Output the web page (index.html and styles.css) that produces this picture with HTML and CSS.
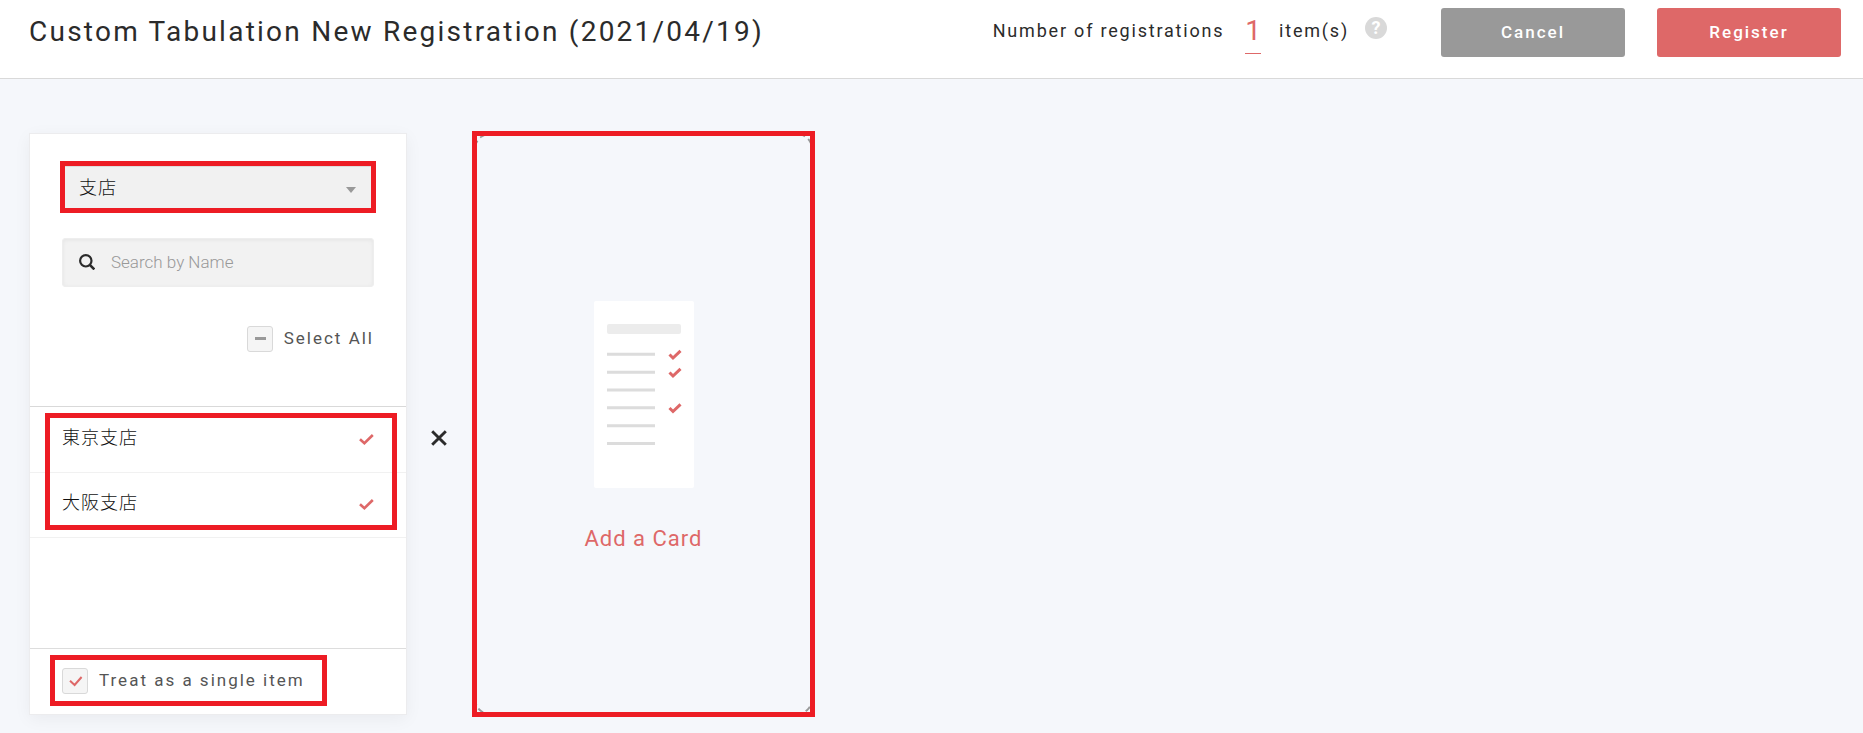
FILE: index.html
```html
<!DOCTYPE html>
<html lang="ja">
<head>
    <meta charset="UTF-8">
    <meta name="viewport" content="width=device-width, initial-scale=1.0">
    <title>Custom Tabulation New Registration</title>
    <link rel="stylesheet" href="styles.css">
</head>
<body>
    <header class="header">
        <h1 class="title">Custom Tabulation New Registration (2021/04/19)</h1>
        <div class="count">
            <span>Number of registrations</span>
            <span class="count-number">1</span>
            <span>item(s)</span>
            <button type="button" class="help" aria-label="Help">?</button>
        </div>
        <div class="actions">
            <button type="button" class="btn btn-cancel">Cancel</button>
            <button type="submit" class="btn btn-register">Register</button>
        </div>
    </header>

    <main class="main">
        <section class="card">
            <div class="card-head">
                <div class="select-box highlight">
                    <select class="select" aria-label="Category">
                        <option>支店</option>
                    </select>
                </div>
                <div class="search-box">
                    <svg class="search-icon" viewBox="0 0 16 16" aria-hidden="true">
                        <circle cx="6.8" cy="6.8" r="5.7" fill="none" stroke="#2b2b2b" stroke-width="2.2"/>
                        <path d="M10.8 10.8L15.4 15.4" stroke="#2b2b2b" stroke-width="2.6"/>
                    </svg>
                    <input type="text" class="search" placeholder="Search by Name" aria-label="Search by Name">
                </div>
                <label class="check-label select-all">
                    <span class="check">
                        <input type="checkbox">
                        <svg viewBox="0 0 26 26" aria-hidden="true"><path d="M8 12.5H19" stroke="#999" stroke-width="3"/></svg>
                    </span>
                    <span class="check-text">Select All</span>
                </label>
            </div>

            <div class="list">
                <ul class="rows highlight">
                    <li>
                        <label class="row">
                            <span class="row-name">東京支店</span>
                            <span class="tick">
                                <input type="checkbox" checked>
                                <svg viewBox="0 0 15 11" aria-hidden="true"><path d="M1 5.2L5.4 9.2L13.8 1" fill="none" stroke="#de6868" stroke-width="2.6"/></svg>
                            </span>
                        </label>
                    </li>
                    <li>
                        <label class="row">
                            <span class="row-name">大阪支店</span>
                            <span class="tick">
                                <input type="checkbox" checked>
                                <svg viewBox="0 0 15 11" aria-hidden="true"><path d="M1 5.2L5.4 9.2L13.8 1" fill="none" stroke="#de6868" stroke-width="2.6"/></svg>
                            </span>
                        </label>
                    </li>
                </ul>
            </div>

            <div class="card-foot">
                <label class="check-label single highlight">
                    <span class="check">
                        <input type="checkbox" checked>
                        <svg viewBox="0 0 26 26" aria-hidden="true"><path d="M8 12.8L12.6 17L19.6 9" fill="none" stroke="#de6868" stroke-width="2"/></svg>
                    </span>
                    <span class="check-text">Treat as a single item</span>
                </label>
            </div>
        </section>

        <svg class="cross" viewBox="0 0 16 16" aria-hidden="true">
            <path d="M1.2 1.2L14.8 14.8M14.8 1.2L1.2 14.8" stroke="#2b2b2b" stroke-width="2.9"/>
        </svg>

        <button type="button" class="add-card highlight">
            <svg class="add-picture" viewBox="0 0 100 187" aria-hidden="true">
                <rect width="100" height="187" rx="2" fill="#fff"/>
                <rect x="13" y="23" width="74" height="10" rx="2" fill="#ececec"/>
                <path d="M13 53.3H61M13 71.2H61M13 89H61M13 106.8H61M13 124.7H61M13 142.5H61" stroke="#dcdcdc" stroke-width="3"/>
                <path d="M75.5 53.5L79 57L86.5 49.8M75.5 71.5L79 75L86.5 67.8M75.5 107L79 110.5L86.5 103.3" fill="none" stroke="#de6868" stroke-width="3"/>
            </svg>
            <span>Add a Card</span>
        </button>
    </main>
</body>
</html>
```

FILE: styles.css
```css
* {
    box-sizing: border-box;
}

body {
    margin: 0;
    min-height: 100vh;
    background-color: #f5f7fb;
    color: #2b2b2b;
    font-family: Roboto, "Noto Sans CJK JP", sans-serif;
    font-size: 18px;
    letter-spacing: 1px;
}

button,
input,
select {
    margin: 0;
    font: inherit;
    letter-spacing: inherit;
}

button {
    cursor: pointer;
}

/* header */
.header {
    display: flex;
    align-items: flex-start;
    padding: 8px 22px 21px 29px;
    background-color: #fff;
    border-bottom: 1px solid #d9d9d9;
}

.title {
    flex: 1;
    margin: 0;
    font-size: 28px;
    font-weight: 400;
    line-height: 48px;
    letter-spacing: 0.08em;
}

.count {
    display: flex;
    align-items: center;
    margin-right: 54px;
    line-height: 46px;
    letter-spacing: 0.1em;
}

.count-number {
    margin: 0 18px 0 21px;
    border-bottom: 1px solid #de6868;
    color: #de6868;
    font-size: 28px;
    line-height: 45px;
    letter-spacing: 0;
}

.help {
    width: 22px;
    height: 22px;
    margin: 0 0 6px 16px;
    padding: 0;
    border: none;
    border-radius: 50%;
    background-color: #d9d9d9;
    color: #fff;
    font-size: 18px;
    font-weight: 700;
    line-height: 22px;
    letter-spacing: 0;
}

.actions {
    display: flex;
    gap: 32px;
}

.btn {
    width: 184px;
    height: 49px;
    padding: 0 0 2px;
    border: none;
    border-radius: 3px;
    color: #fff;
    font-size: 17px;
    font-weight: 500;
    letter-spacing: 2px;
}

.btn-cancel {
    background-color: #999;
}

.btn-register {
    background-color: #de6868;
}

/* red frames */
.highlight {
    position: relative;
}

.highlight::after {
    content: "";
    position: absolute;
    inset: -2px;
    border: 5px solid #ed1c24;
    pointer-events: none;
}

/* card */
.main {
    display: flex;
    align-items: stretch;
    padding: 54px 29px 18px;
}

.card {
    display: flex;
    flex-direction: column;
    width: 378px;
    background-color: #fff;
    border: 1px solid #ececee;
    box-shadow: 0 4px 16px rgba(0, 0, 0, 0.05);
}

.card-head {
    display: flex;
    flex-direction: column;
    padding: 29px 32px 54px;
    border-bottom: 1px solid #d9d9d9;
}

.select-box {
    padding-top: 3px;
}

.select {
    display: block;
    width: 100%;
    height: 45px;
    padding: 0 17px 3px;
    border: none;
    border-top: 1px solid #ddd;
    border-radius: 0;
    background-color: #f1f1f1;
    color: #111;
    font-weight: 300;
    appearance: none;
}

.select-box::before {
    content: "";
    position: absolute;
    top: 24px;
    right: 18px;
    border: 5px solid transparent;
    border-top: 6px solid #999;
    border-bottom: none;
}

.search-box {
    display: flex;
    align-items: center;
    gap: 16px;
    height: 49px;
    margin-top: 27px;
    padding: 0 16px 2px;
    border: 1px solid #eee;
    border-radius: 3px;
    background-color: #f2f2f2;
    box-shadow: inset 0 1px 4px rgba(0, 0, 0, 0.06);
}

.search-icon {
    flex: none;
    width: 16px;
    height: 16px;
}

.search {
    flex: 1;
    min-width: 0;
    padding: 0;
    border: none;
    outline: none;
    background: none;
    font-size: 17px;
    font-weight: 300;
    letter-spacing: 0;
}

.search::placeholder {
    color: #999;
}

.check-label {
    display: flex;
    align-items: center;
    gap: 11px;
    color: #555;
    font-size: 17px;
    line-height: 24px;
    letter-spacing: 2px;
}

.check-text {
    padding-bottom: 2px;
}

.select-all {
    align-self: flex-end;
    margin-top: 39px;
}

.check,
.tick {
    display: grid;
}

.check input,
.check svg,
.tick input,
.tick svg {
    grid-area: 1 / 1;
    width: 26px;
    height: 26px;
    pointer-events: none;
}

.check input {
    border: 1px solid #d9d9d9;
    border-radius: 3px;
    background-color: #f5f5f5;
    appearance: none;
}

.tick input,
.tick svg {
    width: 15px;
    height: 11px;
    appearance: none;
}

.list {
    flex: 1;
    min-height: 241px;
    padding-top: 1px;
}

.rows {
    margin: 0;
    padding: 0;
    list-style: none;
}

.rows::after {
    inset: 5px 9px 8px 15px;
}

.row {
    display: flex;
    align-items: center;
    justify-content: space-between;
    height: 65px;
    padding: 0 32px 2px;
    border-bottom: 1px solid #f1f1f1;
    color: #111;
    font-weight: 300;
}

.row-name {
    padding-bottom: 6px;
}

.card-foot {
    display: flex;
    padding: 19px 32px 20px;
    border-top: 1px solid #ddd;
}

.single::after {
    inset: -13px -22px -12px -12px;
}

.cross {
    flex: none;
    align-self: flex-start;
    width: 16px;
    height: 16px;
    margin: 297px 27px 0 24px;
}

/* add card */
.add-card {
    display: flex;
    flex-direction: column;
    align-items: center;
    width: 339px;
    padding: 166px 0 0;
    border: 2px dashed #999;
    border-radius: 16px;
    background: none;
    color: #de6868;
    font-size: 22px;
}

.add-card::after {
    inset: -4px;
}

.add-picture {
    width: 100px;
    height: 187px;
    margin-bottom: 38px;
}
```
